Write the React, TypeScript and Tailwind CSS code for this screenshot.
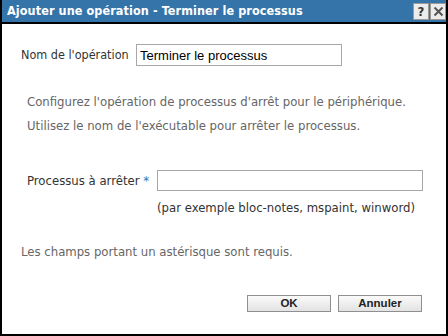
import React from 'react';

const App: React.FC = () => {
  return (
    <div className="w-[448px] h-[336px] bg-white overflow-hidden flex flex-col border-x-2 border-b-2 border-black" style={{ fontFamily: '"DejaVu Sans Condensed", "DejaVu Sans", sans-serif' }}>
      <div className="h-[24px] shrink-0 bg-[#3574a9] border-b-2 border-black flex items-center justify-between -mx-[2px] pl-[7px] pr-[1px]">
        <span className="text-white font-bold text-[12.5px] leading-none tracking-[0.1px]">Ajouter une opération - Terminer le processus</span>
        <div className="flex gap-[1px] mr-[1px]">
          <div className="w-[16px] h-[17px] bg-[#ececec] border border-[#9a9a9a] flex items-center justify-center text-[13px] font-bold text-[#333] leading-none">?</div>
          <div className="w-[16px] h-[17px] bg-[#ececec] border border-[#9a9a9a] flex items-center justify-center">
            <svg width="11" height="11" viewBox="0 0 11 11"><path d="M1.5 1.5 L9.5 9.5 M9.5 1.5 L1.5 9.5" stroke="#555" strokeWidth="2" /></svg>
          </div>
        </div>
      </div>
      <div className="flex-1 flex flex-col text-[13px] leading-[16px] text-[#333]">
        <div className="flex items-center mt-[20px] pl-[19px]">
          <span className="w-[115px] text-[12.5px]">Nom de l'opération</span>
          <input readOnly value="Terminer le processus" className="w-[206px] h-[22px] border border-[#a7a7a7] px-[3px] text-[13px] text-black outline-none" style={{ fontFamily: '"Liberation Sans", Arial, sans-serif' }} />
        </div>
        <div className="pl-[25px] text-[#666] mt-[24px] leading-[24px]">
          <p>Configurez l'opération de processus d'arrêt pour le périphérique.</p>
          <p>Utilisez le nom de l'exécutable pour arrêter le processus.</p>
        </div>
        <div className="flex items-center mt-[32px] pl-[25px]">
          <span className="w-[130px]">Processus à arrêter <span className="text-[#3574a9]">*</span></span>
          <input readOnly className="w-[266px] h-[21px] border border-[#a7a7a7] outline-none" />
        </div>
        <p className="pl-[155px] mt-[9px]">(par exemple bloc-notes, mspaint, winword)</p>
        <p className="pl-[19px] mt-[28px] text-[#666]">Les champs portant un astérisque sont requis.</p>
        <div className="flex justify-end gap-[7px] mt-[35px] pr-[24px]">
          {['OK', 'Annuler'].map(l => (
            <button key={l} className="w-[84px] h-[17px] bg-gradient-to-b from-[#fafafa] to-[#e3e3e3] border border-[#8f8f8f] text-[11.5px] font-bold text-[#222] leading-none" style={{ fontFamily: '"Liberation Sans", Arial, sans-serif' }}>{l}</button>
          ))}
        </div>
      </div>
    </div>
  );
};

export default App;
